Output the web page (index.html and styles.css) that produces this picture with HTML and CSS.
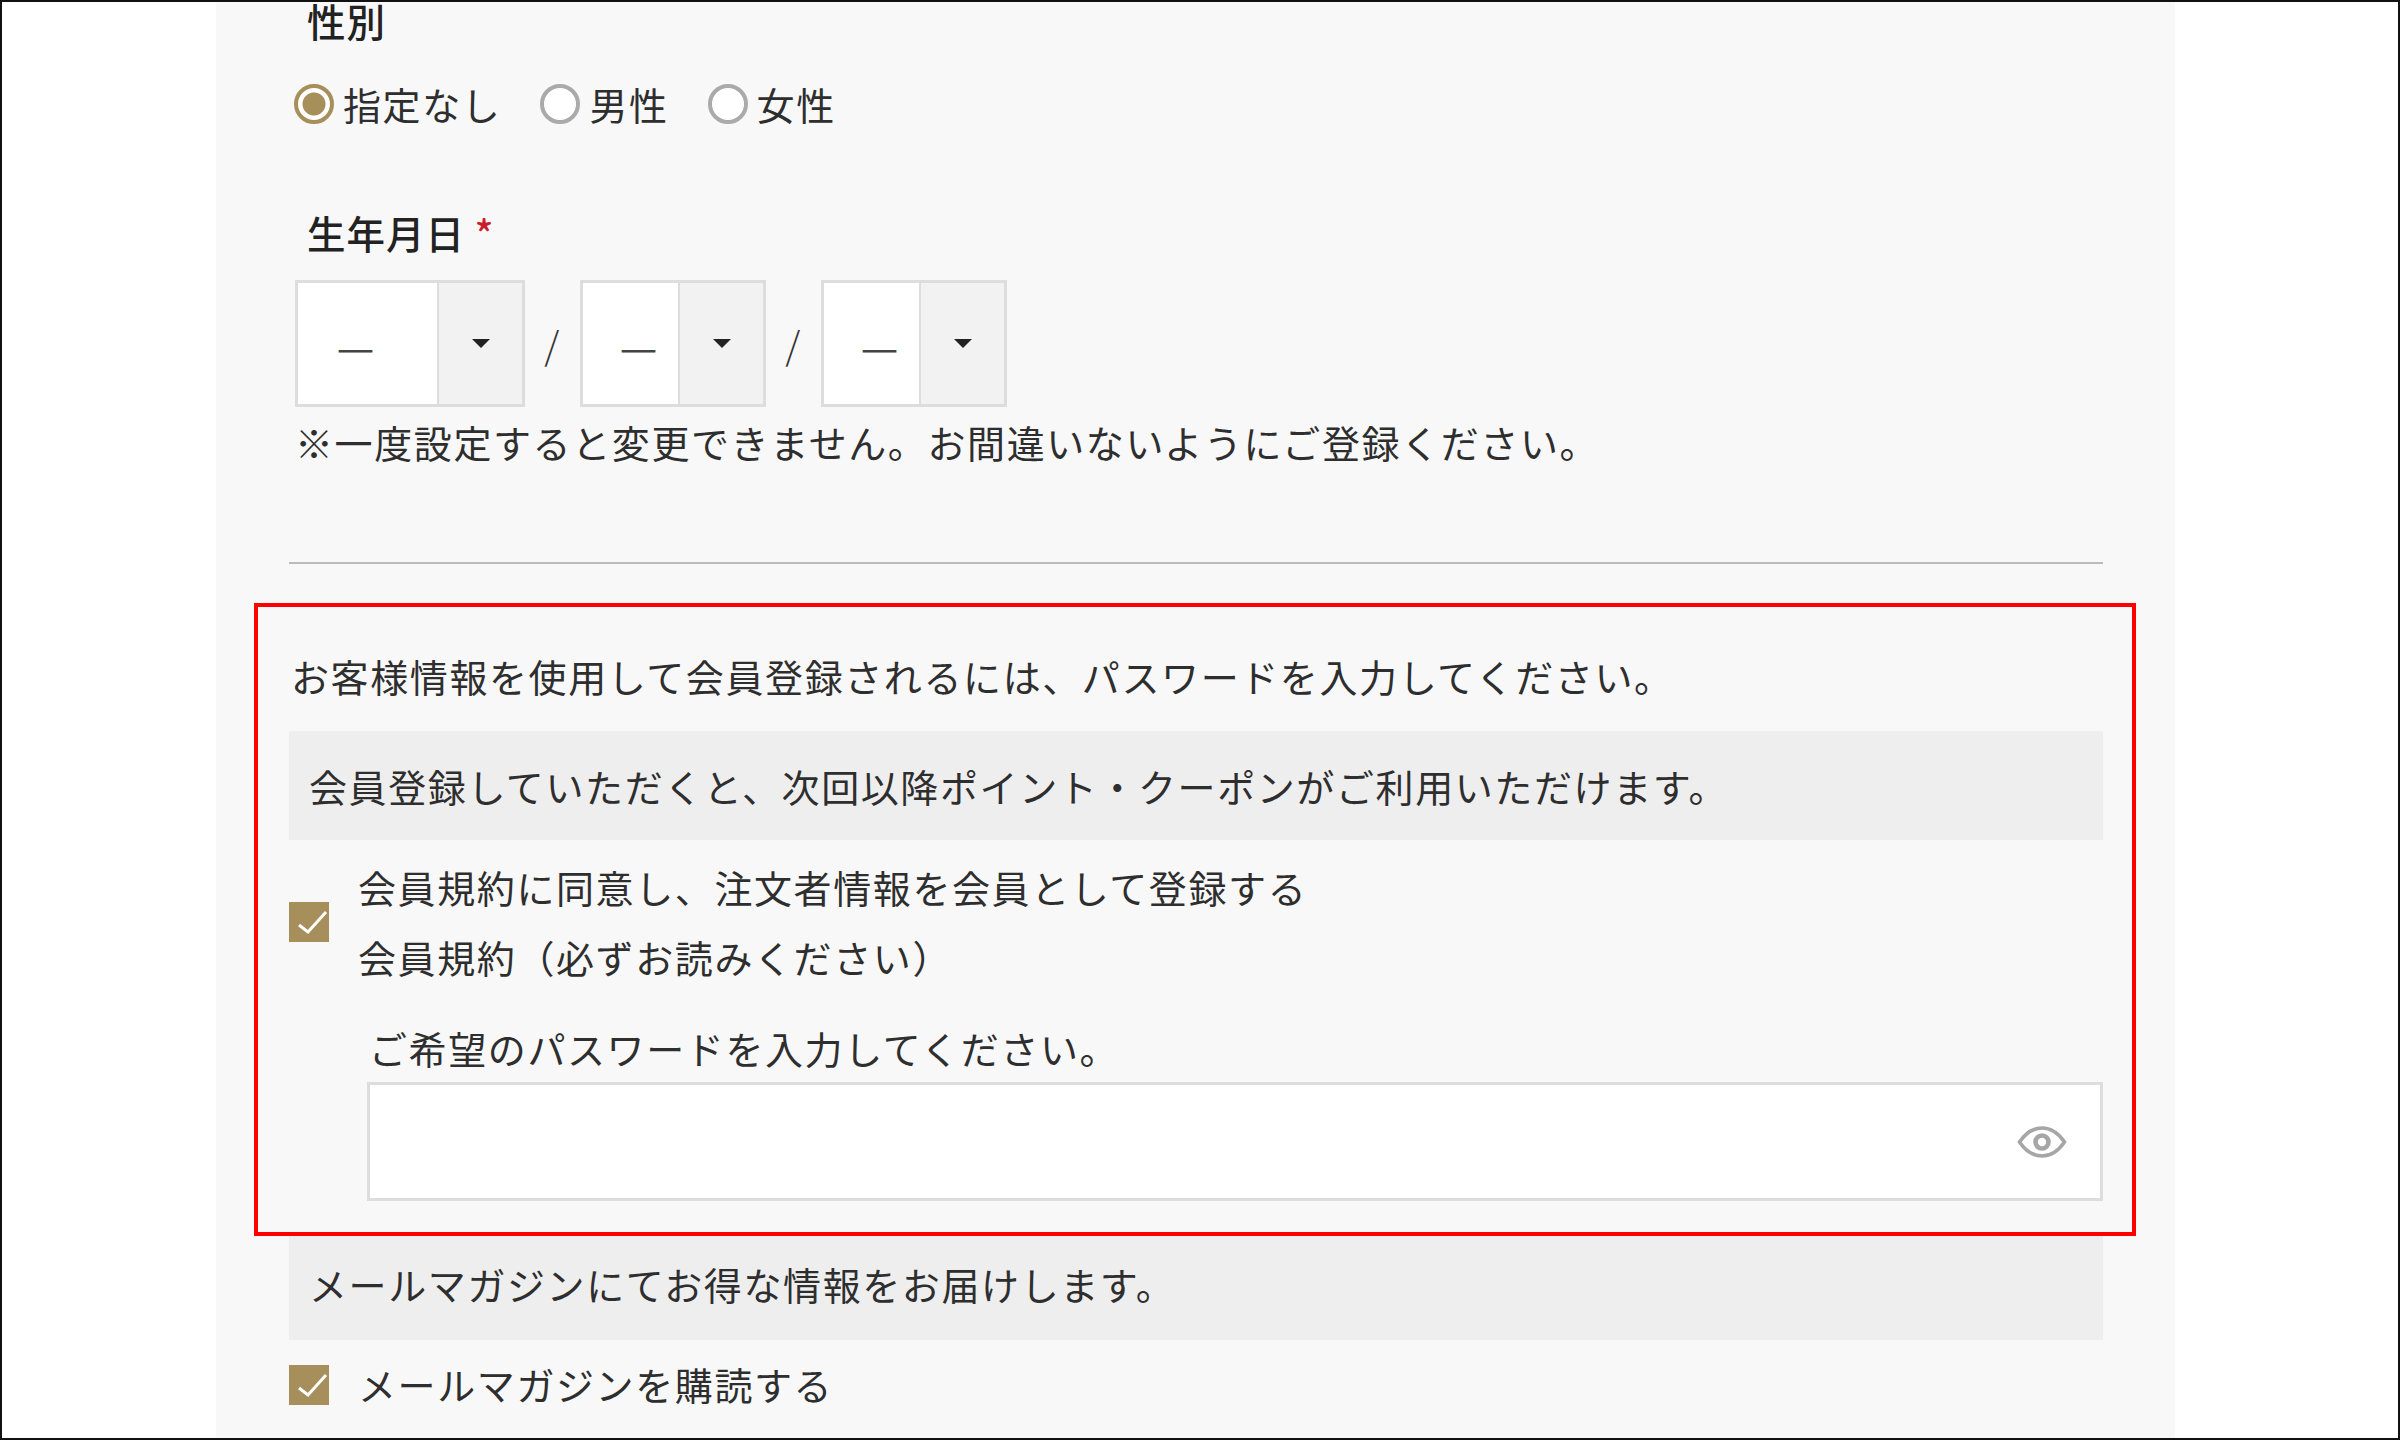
FILE: index.html
```html
<!DOCTYPE html>
<html lang="ja">
<head>
<meta charset="utf-8">
<title>お客様情報</title>
<link rel="stylesheet" href="styles.css">
</head>
<body>
<div class="frame">
  <main class="panel">
    <div class="label label-top">性別</div>
    <div class="radios">
      <label class="radio-item"><span class="radio checked"></span>指定なし</label>
      <label class="radio-item"><span class="radio"></span>男性</label>
      <label class="radio-item"><span class="radio"></span>女性</label>
    </div>

    <div class="label label-dob">生年月日 <span class="req">*</span></div>
    <div class="dob">
      <div class="select sel-year"><span class="sel-val">—</span><span class="sel-arrow"><i class="tri"></i></span></div>
      <span class="slash">/</span>
      <div class="select sel-md"><span class="sel-val">—</span><span class="sel-arrow"><i class="tri"></i></span></div>
      <span class="slash">/</span>
      <div class="select sel-md"><span class="sel-val">—</span><span class="sel-arrow"><i class="tri"></i></span></div>
    </div>
    <p class="note">※一度設定すると変更できません。お間違いないようにご登録ください。</p>
    <hr class="rule">

    <section class="member">
      <p class="intro">お客様情報を使用して会員登録されるには、パスワードを入力してください。</p>
      <div class="band band-member">会員登録していただくと、次回以降ポイント・クーポンがご利用いただけます。</div>
      <div class="agree">
        <span class="check"><svg viewBox="0 0 40 40"><path d="M10 23l9 7L37 10" fill="none" stroke="#fff" stroke-width="3"/></svg></span>
        <div class="agree-text">
          <div>会員規約に同意し、注文者情報を会員として登録する</div>
          <div>会員規約（必ずお読みください）</div>
        </div>
      </div>
      <div class="pw-label">ご希望のパスワードを入力してください。</div>
      <div class="pw-input">
        <svg class="eye" viewBox="0 0 50 32"><path d="M2.500 16C9 6.500 17 2 25 2s16 4.500 22.500 14C41 25.500 33 30 25 30S9 25.500 2.500 16z" fill="none" stroke="#a6a6a6" stroke-width="3.600"/><circle cx="25" cy="16" r="6.500" fill="none" stroke="#a6a6a6" stroke-width="4.600"/></svg>
      </div>
    </section>

    <div class="band band-mail">メールマガジンにてお得な情報をお届けします。</div>
    <div class="mail-row">
      <span class="check"><svg viewBox="0 0 40 40"><path d="M10 23l9 7L37 10" fill="none" stroke="#fff" stroke-width="3"/></svg></span>
      <span class="mail-text">メールマガジンを購読する</span>
    </div>
  </main>
</div>
</body>
</html>
```

FILE: styles.css
```css
* { box-sizing: border-box; }
html, body { margin: 0; padding: 0; }
body {
  width: 2400px;
  height: 1440px;
  overflow: hidden;
  background: #fff;
  color: #2e2e2e;
  font-family: "Noto Sans CJK JP", "Noto Sans", sans-serif;
  font-size: 38px;
  letter-spacing: 1.6px;
}
.frame {
  width: 2400px;
  height: 1440px;
  border: 2px solid #111;
  overflow: hidden;
  background: #fff;
}
.panel {
  width: 1959px;
  height: 1436px;
  margin-left: 214px;
  padding: 0 72px 0 73px;
  background: #f8f8f8;
}
.label { color: #222; font-weight: 500; padding-left: 18px; font-size: 38.5px; letter-spacing: 1px; }
.label-top { line-height: 36px; height: 42px; }
.radios { display: flex; margin-top: 40px; height: 40px; margin-left: 5px; align-items: center; }
.radio-item { display: flex; align-items: center; line-height: 38px; margin-right: 39px; gap: 9px; }
.radio {
  display: block; width: 40px; height: 40px;
  border: 4px solid #aaa; border-radius: 50%; background: #fff;
}
.radio.checked { border-color: #a68f5b; background: radial-gradient(circle, #a68f5b 0 11px, #fff 12px); }
.label-dob { margin-top: 85px; line-height: 46px; height: 50px; }
.req { color: #c8202a; }
.dob { display: flex; margin-top: 21px; margin-left: 6px; height: 127px; }
.select {
  display: flex; height: 127px; border: 3px solid #ddd; background: #fff;
}
.sel-year { width: 230px; }
.sel-md { width: 186px; }
.sel-val {
  flex: 1; text-align: center; color: #444; font-size: 42px; line-height: 124px; letter-spacing: 0;
}
.sel-year .sel-val { padding-right: 24px; }
.sel-md .sel-val { padding-left: 16px; }
.sel-arrow {
  width: 85px; flex: none; background: #f2f2f2; border-left: 2px solid #ddd;
  display: flex; align-items: center; justify-content: center;
}
.tri {
  display: block; width: 0; height: 0;
  border-left: 9px solid transparent; border-right: 9px solid transparent; border-top: 9px solid #222;
}
.slash { width: 55px; text-align: center; line-height: 127px; font-weight: 300; color: #333; }
.note { margin: 11px 0 0 6px; line-height: 47px; height: 50px; }
.rule { margin: 94px 0 0; height: 2px; border: 0; background: #bbb; }
.member { position: relative; margin-top: 39px; padding: 49px 0 35px; }
.member::after {
  content: ""; position: absolute; top: 0; bottom: 0; left: -35px; right: -33px;
  border: 4px solid #f00; pointer-events: none;
}
.intro { margin: 0 0 0 2px; line-height: 47px; height: 50px; }
.band { background: #eee; display: flex; align-items: center; padding-left: 20px; }
.band-member { margin-top: 29px; height: 109px; }
.agree { display: flex; align-items: center; margin-top: 12px; }
.agree .check { margin-bottom: 4px; }
.check { display: block; flex: none; width: 40px; height: 40px; background: #a68f5b; }
.check svg { display: block; width: 40px; height: 40px; }
.agree-text { margin-left: 29px; line-height: 70px; padding-bottom: 3px; }
.pw-label { margin: 30px 0 0 80px; line-height: 46px; height: 50px; }
.pw-input {
  display: flex; align-items: center; justify-content: flex-end;
  margin: 7px 0 0 78px; height: 119px; padding-right: 33px;
  background: #fff; border: 3px solid #ddd;
}
.eye { width: 50px; height: 32px; display: block; }
.band-mail { height: 104px; padding-bottom: 10px; }
.mail-row { display: flex; align-items: center; gap: 29px; margin-top: 25px; height: 40px; }
.mail-text { line-height: 38px; padding-bottom: 3px; }
```
